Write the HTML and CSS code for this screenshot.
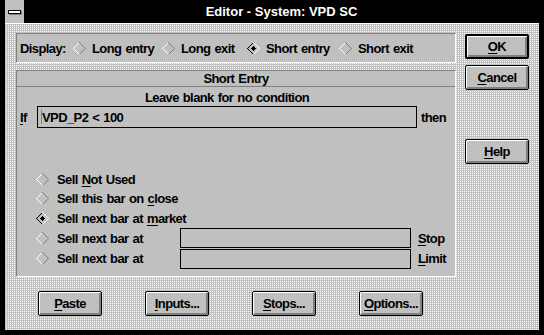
FILE: index.html
```html
<!DOCTYPE html>
<html>
<head>
<meta charset="utf-8">
<link rel="stylesheet" href="styles.css">
</head>
<body>
<div class="window">
  <div class="titlebar">
    <div class="sysmenu"><span class="sysbar"></span></div>
    <div class="title">Editor - System: VPD SC</div>
  </div>
  <div class="client">
    <div class="top">
      <div class="left">
        <div class="panel display">
          <span class="lbl">Display:</span>
          <span class="opt w1"><svg class="dia" width="13" height="13" viewBox="0 0 13 13"><path d="M6.5 .5L.5 6.5L6.5 12.5" fill="none" stroke="#fff"/><path d="M6.5 .5L12.5 6.5L6.5 12.5" fill="none" stroke="#808080"/></svg><span>Long entry</span></span>
          <span class="opt w2"><svg class="dia" width="13" height="13" viewBox="0 0 13 13"><path d="M6.5 .5L.5 6.5L6.5 12.5" fill="none" stroke="#fff"/><path d="M6.5 .5L12.5 6.5L6.5 12.5" fill="none" stroke="#808080"/></svg><span>Long exit</span></span>
          <span class="opt w3"><svg class="dia" width="13" height="13" viewBox="0 0 13 13"><path d="M6.5 .5L.5 6.5L6.5 12.5" fill="none" stroke="#000"/><path d="M6.5 .5L12.5 6.5L6.5 12.5" fill="none" stroke="#fff"/><path d="M6.5 4L9 6.5L6.5 9L4 6.5Z" fill="#000"/></svg><span>Short entry</span></span>
          <span class="opt"><svg class="dia" width="13" height="13" viewBox="0 0 13 13"><path d="M6.5 .5L.5 6.5L6.5 12.5" fill="none" stroke="#fff"/><path d="M6.5 .5L12.5 6.5L6.5 12.5" fill="none" stroke="#808080"/></svg><span>Short exit</span></span>
        </div>
        <div class="panel entry">
          <div class="hdr">Short Entry</div>
          <div class="hint">Leave blank for no condition</div>
          <div class="ifrow">
            <span class="iflbl"><u>I</u>f</span>
            <div class="field cond"><span class="caret"></span><span>VPD_P2 &lt; 100</span></div>
            <span class="then">then</span>
          </div>
          <div class="radios">
            <span class="radio full"><svg class="dia" width="13" height="13" viewBox="0 0 13 13"><path d="M6.5 .5L.5 6.5L6.5 12.5" fill="none" stroke="#fff"/><path d="M6.5 .5L12.5 6.5L6.5 12.5" fill="none" stroke="#808080"/></svg><span>Sell <u>N</u>ot Used</span></span>
            <span class="radio full"><svg class="dia" width="13" height="13" viewBox="0 0 13 13"><path d="M6.5 .5L.5 6.5L6.5 12.5" fill="none" stroke="#fff"/><path d="M6.5 .5L12.5 6.5L6.5 12.5" fill="none" stroke="#808080"/></svg><span>Sell this bar on <u>c</u>lose</span></span>
            <span class="radio full"><svg class="dia" width="13" height="13" viewBox="0 0 13 13"><path d="M6.5 .5L.5 6.5L6.5 12.5" fill="none" stroke="#000"/><path d="M6.5 .5L12.5 6.5L6.5 12.5" fill="none" stroke="#fff"/><path d="M6.5 4L9 6.5L6.5 9L4 6.5Z" fill="#000"/></svg><span>Sell next bar at <u>m</u>arket</span></span>
            <span class="radio"><svg class="dia" width="13" height="13" viewBox="0 0 13 13"><path d="M6.5 .5L.5 6.5L6.5 12.5" fill="none" stroke="#fff"/><path d="M6.5 .5L12.5 6.5L6.5 12.5" fill="none" stroke="#808080"/></svg><span>Sell next bar at</span></span>
            <div class="field small"></div>
            <span class="unit"><u>S</u>top</span>
            <span class="radio"><svg class="dia" width="13" height="13" viewBox="0 0 13 13"><path d="M6.5 .5L.5 6.5L6.5 12.5" fill="none" stroke="#fff"/><path d="M6.5 .5L12.5 6.5L6.5 12.5" fill="none" stroke="#808080"/></svg><span>Sell next bar at</span></span>
            <div class="field small last"></div>
            <span class="unit"><u>L</u>imit</span>
          </div>
        </div>
      </div>
      <div class="side">
        <div class="btn default"><span><u>O</u>K</span></div>
        <div class="btn cancel"><span><u>C</u>ancel</span></div>
        <div class="btn help"><span><u>H</u>elp</span></div>
      </div>
    </div>
    <div class="bottom">
      <div class="btn"><span><u>P</u>aste</span></div>
      <div class="btn"><span><u>I</u>nputs...</span></div>
      <div class="btn"><span><u>S</u>tops...</span></div>
      <div class="btn"><span><u>O</u>ptions...</span></div>
    </div>
  </div>
</div>
</body>
</html>
```
FILE: styles.css
```css
html, body {
  margin: 0;
  padding: 0;
  background: #000;
}
body {
  font: bold 13px/1 "Liberation Sans", Arial, sans-serif;
  letter-spacing: -0.6px;
  word-spacing: 1px;
  color: #000;
}
u { text-decoration: underline; text-underline-offset: 2px; }
.window {
  width: 544px;
  height: 335px;
  box-sizing: border-box;
  padding: 0 5px 5px;
  background: #000;
  display: flex;
  flex-direction: column;
}
.titlebar {
  height: 23px;
  border-bottom: 1px solid #fff;
  display: flex;
  flex: none;
}
.sysmenu {
  width: 19px;
  height: 23px;
  background: #c0c0c0;
  display: flex;
  align-items: center;
  justify-content: center;
}
.sysbar {
  width: 11px;
  height: 2px;
  background: #fff;
  border: 1px solid #000;
  box-shadow: 1px 1px 0 #808080;
}
.title {
  flex: 1;
  color: #fff;
  text-align: center;
  line-height: 23px;
  letter-spacing: 0;
  word-spacing: 0;
}
.client {
  flex: 1;
  background-color: #fff;
  background-image: linear-gradient(#c0c0c0 1px, transparent 1px), linear-gradient(90deg, #c0c0c0 1px, #fff 1px);
  background-size: 2px 2px;
  padding: 9px 0 0 11px;
}
.top { display: flex; }
.left { width: 440px; }
.panel {
  background: #c0c0c0;
  border: 1px solid;
  border-color: #808080 #fff #fff #808080;
  box-sizing: border-box;
}
.display {
  height: 30px;
  display: flex;
  align-items: center;
  padding-left: 3px;
}
.lbl { width: 53px; }
.opt { display: inline-flex; align-items: center; gap: 6px; }
.w1 { width: 89px; }
.w2 { width: 85px; }
.w3 { width: 92px; }
.dia { display: block; flex: none; shape-rendering: crispEdges; }
.entry {
  height: 207px;
  margin-top: 7px;
}
.hdr {
  height: 15px;
  line-height: 15px;
  text-align: center;
  border-bottom: 1px solid #808080;
}
.hint {
  margin: 3px 0 0 20px;
  width: 380px;
  height: 16px;
  line-height: 16px;
  text-align: center;
}
.ifrow {
  display: flex;
  align-items: center;
  height: 22px;
  padding-left: 3px;
}
.iflbl { width: 17px; }
.field {
  background: #c0c0c0;
  border: 1px solid #000;
  box-sizing: border-box;
}
.cond {
  width: 380px;
  height: 22px;
  display: flex;
  align-items: center;
  padding-left: 3px;
}
.caret {
  width: 1px;
  height: 14px;
  background: #808080;
}
.then { margin-left: 4px; }
.radios {
  display: grid;
  grid-template-columns: 144px 231px auto;
  grid-template-rows: 20px 19px 20px 20px 21px;
  align-items: center;
  margin-top: 41px;
  padding-left: 19px;
}
.radio { display: inline-flex; align-items: center; gap: 8px; }
.full { grid-column: 1 / -1; }
.small { height: 20px; }
.last { align-self: end; }
.unit { margin-left: 7px; }
.side {
  display: flex;
  flex-direction: column;
  margin-left: 9px;
  padding-top: 1px;
}
.btn {
  width: 64px;
  height: 25px;
  box-sizing: border-box;
  border: 1px solid #000;
  border-radius: 2px;
  background: #c0c0c0;
  box-shadow: inset 1px 1px 0 #fff, inset -2px -2px 0 #808080;
  display: flex;
  align-items: center;
  justify-content: center;
}
.default { border-width: 2px; }
.cancel { margin-top: 6px; }
.help { margin-top: 49px; }
.bottom {
  display: flex;
  gap: 43px;
  margin-top: 14px;
  padding-left: 22px;
}
```
